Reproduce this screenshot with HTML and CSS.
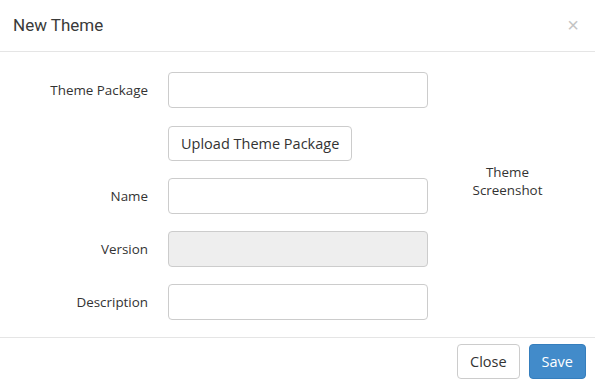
FILE: index.html
```html
<!DOCTYPE html>
<html lang="en">
<head>
    <meta charset="UTF-8">
    <meta name="viewport" content="width=device-width, initial-scale=1.0">
    <title>New Theme</title>
    <link rel="stylesheet" href="styles.css">
</head>
<body>

    <div class="modal">
        <div class="modal-header">
            <h4 class="modal-title">New Theme</h4>
            <button class="close-x">&times;</button>
        </div>

        <div class="modal-body">
            <div class="form">
                <div class="form-row">
                    <label>Theme Package</label>
                    <input type="text" class="field">
                </div>
                <div class="form-row">
                    <span class="label-space"></span>
                    <button class="btn">Upload Theme Package</button>
                </div>
                <div class="form-row">
                    <label>Name</label>
                    <input type="text" class="field">
                </div>
                <div class="form-row">
                    <label>Version</label>
                    <input type="text" class="field" disabled>
                </div>
                <div class="form-row">
                    <label>Description</label>
                    <input type="text" class="field">
                </div>
            </div>
            <div class="screenshot">Theme<br>Screenshot</div>
        </div>

        <div class="modal-footer">
            <button class="btn">Close</button>
            <button class="btn btn-primary">Save</button>
        </div>
    </div>

</body>
</html>
```

FILE: styles.css
```css
* {
    margin: 0;
    padding: 0;
    box-sizing: border-box;
}
body {
    background-color: #fff;
    font-family: "Open Sans", Arial, sans-serif;
    color: #333;
}
.modal {
    width: 595px;
}
.modal-header {
    height: 52px;
    display: flex;
    align-items: center;
    justify-content: space-between;
    padding: 0 13px 2px 13px;
    border-bottom: 1px solid #e5e5e5;
}
.modal-title {
    font-family: Roboto, Arial, sans-serif;
    font-weight: normal;
    font-size: 17px;
    color: #3a3a3a;
}
.close-x {
    background: transparent;
    border: none;
    color: #c4c4c4;
    font-size: 20px;
    line-height: 1;
    font-family: Arial, sans-serif;
    margin-right: 3px;
    cursor: pointer;
}
.modal-body {
    display: flex;
    padding-top: 20px;
    padding-bottom: 17px;
}
.form {
    width: 428px;
    display: flex;
    flex-direction: column;
    gap: 17px;
}
.form-row {
    display: flex;
    align-items: center;
    gap: 20px;
    height: 36px;
}
.form-row label,
.label-space {
    width: 148px;
    text-align: right;
    font-size: 13.4px;
}
.field {
    width: 260px;
    height: 36px;
    border: 1px solid #ccc;
    border-radius: 4px;
    background: #fff;
}
.field:disabled {
    background-color: #eee;
}
.btn {
    font-family: "Open Sans", Arial, sans-serif;
    font-size: 14.5px;
    color: #333;
    background: #fff;
    border: 1px solid #ccc;
    border-radius: 4px;
    height: 35px;
    padding: 0 12px;
    cursor: pointer;
}
.btn-primary {
    background-color: #428bca;
    border-color: #357ebd;
    color: #fff;
}
.screenshot {
    flex: 1;
    text-align: center;
    font-size: 13.4px;
    line-height: 18px;
    padding-top: 91px;
    padding-right: 8px;
}
.modal-footer {
    border-top: 1px solid #e5e5e5;
    display: flex;
    justify-content: flex-end;
    gap: 9px;
    padding: 6px 9px 0 0;
}
```
